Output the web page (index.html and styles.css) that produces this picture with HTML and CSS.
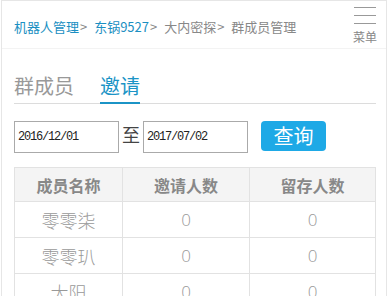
FILE: index.html
```html
<!DOCTYPE html>
<html lang="zh-CN">
<head>
<meta charset="utf-8">
<link rel="stylesheet" href="styles.css">
</head>
<body>
<div class="page">
  <header class="header">
    <nav class="crumbs">
      <a class="link">机器人管理</a><span class="sep">&gt;</span>
      <a class="link">东锅9527</a><span class="sep">&gt;</span>
      <span class="cur">大内密探</span><span class="sep">&gt;</span>
      <span class="cur">群成员管理</span>
    </nav>
    <div class="menu">
      <span class="bar"></span><span class="bar"></span><span class="bar"></span>
      <span class="menu-text">菜单</span>
    </div>
  </header>
  <div class="tabs">
    <span class="tab">群成员</span>
    <span class="tab active">邀请</span>
  </div>
  <div class="search">
    <input class="date" type="text" value="2016/12/01">
    <span class="to">至</span>
    <input class="date" type="text" value="2017/07/02">
    <button class="btn">查询</button>
  </div>
  <table class="grid">
    <thead>
      <tr><th>成员名称</th><th>邀请人数</th><th>留存人数</th></tr>
    </thead>
    <tbody>
      <tr><td>零零柒</td><td class="num">0</td><td class="num">0</td></tr>
      <tr><td>零零玐</td><td class="num">0</td><td class="num">0</td></tr>
      <tr><td>太阳</td><td class="num">0</td><td class="num">0</td></tr>
    </tbody>
  </table>
</div>
</body>
</html>
```

FILE: styles.css
```css
* { box-sizing: border-box; }
html, body { margin: 0; padding: 0; background: #fff; }
body {
  font-family: "Noto Sans CJK SC", "Noto Sans", sans-serif;
  overflow: hidden;
  height: 296px;
}
.page {
  margin-left: 1px;
  width: 386px;
  height: 320px;
  border: 1px solid #e6e6e6;
  padding: 0 9px 0 12px;
}
.header {
  height: 48px;
  display: flex;
  align-items: center;
  justify-content: space-between;
  border-bottom: 1px solid #f3f3f3;
  margin: 0 -9px 0 -12px;
  padding: 0 9px 0 12px;
}
.crumbs {
  font-size: 13px;
  line-height: 18px;
  margin-top: 5px;
  white-space: nowrap;
  color: #888;
}
.link { color: #1b8fc2; }
.sep { color: #888; margin: 0 4px 0 1px; }
.cur { color: #888; }
.menu {
  width: 24px;
  display: flex;
  flex-direction: column;
  align-items: center;
  padding-top: 1px;
}
.bar {
  display: block;
  width: 22px;
  height: 1px;
  background: #999;
  margin-bottom: 7px;
}
.menu-text {
  font-size: 12px;
  line-height: 14px;
  color: #888;
  margin-top: -1px;
}
.tabs {
  margin-top: 23px;
  display: flex;
  gap: 26px;
  border-bottom: 1px solid #dcdcdc;
  width: 362px;
}
.tab {
  font-size: 20px;
  line-height: 28px;
  padding-bottom: 2px;
  color: #999;
  border-bottom: 2px solid transparent;
  margin-bottom: -1px;
}
.tab.active {
  color: #1b94c6;
  border-bottom-color: #1b94c6;
}
.search {
  margin-top: 17px;
  display: flex;
  align-items: flex-start;
  height: 32px;
}
.date {
  width: 105px;
  height: 32px;
  border: 1px solid #aaa;
  padding: 0 0 0 3px;
  font-family: "Liberation Mono", monospace;
  font-size: 12px;
  letter-spacing: -1.2px;
  color: #222;
  outline: none;
  background: #fff;
}
.to {
  font-size: 18px;
  line-height: 26px;
  color: #444;
  width: 24px;
  text-align: center;
}
.btn {
  margin-left: 13px;
  width: 65px;
  height: 30px;
  border: none;
  border-radius: 4px;
  background: #1ea9e6;
  color: #fff;
  font-family: "Noto Sans CJK SC", sans-serif;
  font-size: 20px;
  line-height: 28px;
  padding: 0;
}
.grid {
  margin-top: 14px;
  width: 362px;
  border-collapse: collapse;
  table-layout: fixed;
}
.grid th, .grid td {
  border: 1px solid #e2e2e2;
  text-align: center;
  padding: 0;
}
.grid th:nth-child(1) { width: 108px; }
.grid th:nth-child(2) { width: 127px; }
.grid th {
  height: 34px;
  background: #f4f4f4;
  color: #888;
  font-size: 16px;
  font-weight: 700;
}
.grid td {
  height: 36px;
  color: #999;
  font-size: 18px;
  font-weight: 300;
}
.grid td.num {
  font-family: "Open Sans", sans-serif;
  font-size: 17px;
  font-weight: 300;
}
```
